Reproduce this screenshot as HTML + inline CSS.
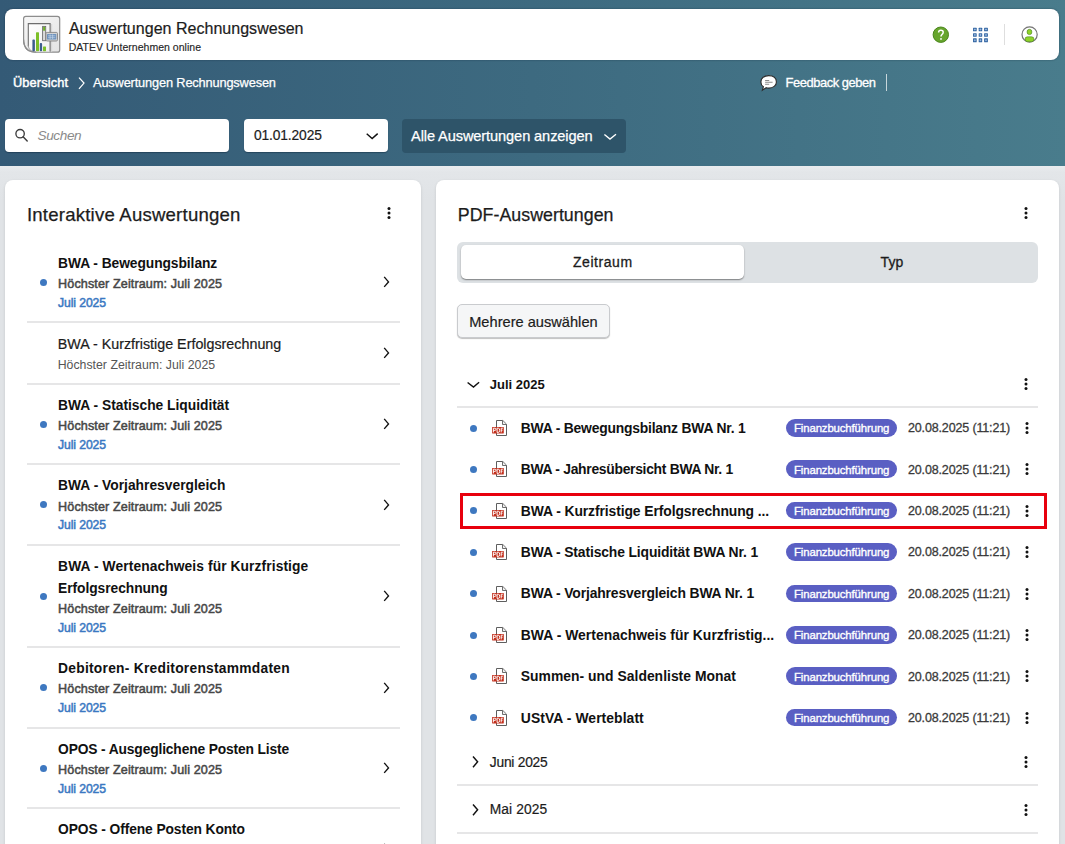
<!DOCTYPE html>
<html lang="de">
<head>
<meta charset="utf-8">
<title>Auswertungen Rechnungswesen</title>
<style>
html,body{margin:0;padding:0}
body{width:1065px;height:844px;overflow:hidden;position:relative;background:linear-gradient(#eaecee 166px,#e3e6e9 172px,#e0e3e6 200px,#e0e3e6);font-family:"Liberation Sans",sans-serif}
.t{position:absolute;line-height:1;white-space:pre}
.ic{position:absolute;overflow:visible}
.band{position:absolute;left:0;top:0;width:1065px;height:166px;background:linear-gradient(90deg,#345a76 0%,#3d6a80 50%,#497c8c 100%)}
.hdr{position:absolute;left:5px;top:9px;width:1054px;height:51px;background:#fff;border-radius:8px;box-shadow:0 0 2px rgba(0,20,40,.45)}
.inp{position:absolute;top:119px;height:33px;background:#fff;border-radius:4px;box-shadow:0 1px 1px rgba(0,20,40,.35)}
.dd{position:absolute;left:402px;top:119px;width:224px;height:33.5px;background:#2e5469;border-radius:4px}
.card{position:absolute;top:180px;height:700px;background:#fff;border-radius:8px;box-shadow:0 1px 3px rgba(0,0,0,.12)}
.sep{position:absolute;height:2px;background:#e6e6e7}
.dot{position:absolute;width:7px;height:7px;border-radius:50%;background:#3e78c0}
.badge{position:absolute;width:110.8px;height:17.7px;border-radius:9px;background:#5a5fc3}
.seg{position:absolute;left:457.4px;top:241.5px;width:580.2px;height:41.2px;background:#dde1e4;border-radius:6px}
.segw{position:absolute;left:460.6px;top:245.4px;width:283.9px;height:33.3px;background:#fff;border-radius:5px;box-shadow:0 1px 1.5px rgba(0,0,0,.45)}
.btn{position:absolute;left:457.4px;top:304.1px;width:150.4px;height:32.3px;background:#f5f6f7;border:1px solid #c9cbce;border-radius:5px;box-shadow:0 1px 1px rgba(0,0,0,.25)}
.red{position:absolute;left:460px;top:493px;width:581px;height:30px;border:3px solid #e8000d}
</style>
</head>
<body>
<div class="band"></div>
<div class="hdr"></div>
<!-- app icon -->
<svg class="ic" style="left:20px;top:14px" width="42" height="42" viewBox="0 0 42 42">
  <defs>
    <linearGradient id="pg" x1="0" y1="0" x2="1" y2="1"><stop offset="0" stop-color="#f7f7f7"/><stop offset="1" stop-color="#e4e4e4"/></linearGradient>
    <linearGradient id="ig" x1="0" y1="0" x2="1" y2="1"><stop offset="0" stop-color="#ffffff"/><stop offset="1" stop-color="#f0f0f0"/></linearGradient>
  </defs>
  <path d="M5.8 2.4 H37.4 Q39.7 2.4 39.7 4.7 V35.9 Q39.7 38.2 37.4 38.2 H16.2 Q3.6 38.2 3.6 25.6 V4.6 Q3.6 2.4 5.8 2.4 Z" fill="url(#pg)" stroke="#8d8d8d" stroke-width="1.2"/>
  <rect x="30.6" y="10" width="1.6" height="27.6" fill="#d9d9d9"/>
  <path d="M8.3 37.6 V9.6 H30.1 V37.6" fill="url(#ig)" stroke="none"/>
  <path d="M8.3 32.5 V9.6 H30.1 V37.4" fill="none" stroke="#6e6e6e" stroke-width="1.1"/>
  <path d="M8.3 31.5 Q8.6 37.2 14.5 37.7" fill="none" stroke="#9a9a9a" stroke-width="0.9"/>
  <path d="M16.2 38.2 Q3.6 38.2 3.6 25.6" fill="none" stroke="#8d8d8d" stroke-width="1.2"/>
  <rect x="12.4" y="25.6" width="2.5" height="11.6" rx="0.8" fill="#3d5d8c"/>
  <rect x="16" y="18.2" width="3" height="19" rx="0.6" fill="#7cbf28"/>
  <rect x="19.8" y="29.1" width="2.3" height="8.1" rx="0.8" fill="#3d5d8c"/>
  <rect x="23" y="32.6" width="3" height="4.6" rx="0.4" fill="#7cbf28"/>
  <rect x="22.6" y="12.4" width="3.1" height="14.3" fill="#dcdcdc" stroke="#6f6f6f" stroke-width="0.9"/>
  <rect x="23.1" y="12.9" width="2.1" height="3.8" fill="#6fb12a"/>
  <rect x="25.9" y="18.4" width="11.6" height="8.6" rx="1.2" fill="#d4d4d4" stroke="#858585" stroke-width="0.9"/>
  <rect x="27" y="19.9" width="9.3" height="5.6" rx="0.5" fill="#6f93bd"/>
  <path d="M28 21.8 H35.3 M28 23.7 H35.3 M30.1 20.4 V25 M32.6 20.4 V25" stroke="#d6e4f4" stroke-width="0.6" opacity="0.9"/>
</svg>
<!-- help -->
<svg class="ic" style="left:932px;top:26px" width="18" height="18" viewBox="0 0 18 18">
  <circle cx="8.8" cy="8.7" r="7.7" fill="#67a52d" stroke="#4a861c" stroke-width="1"/>
  <path d="M6.6 6.5 Q6.6 4.3 8.9 4.3 Q11.2 4.3 11.2 6.3 Q11.2 7.6 10.1 8.3 Q9 9 9 10.6" fill="none" stroke="#fff" stroke-width="1.5"/><circle cx="9" cy="12.9" r="0.95" fill="#fff"/>
</svg>
<!-- grid -->
<svg class="ic" style="left:972px;top:27px" width="17" height="16" viewBox="0 0 17 16">
  <g fill="#3567a3"><rect x="1.0" y="0.7" width="3.7" height="3.6" rx="0.5"/><rect x="1.0" y="6.2" width="3.7" height="3.5" rx="0.5"/><rect x="1.0" y="11.3" width="3.7" height="3.9" rx="0.5"/><rect x="6.7" y="0.7" width="3.5" height="3.6" rx="0.5"/><rect x="6.7" y="6.2" width="3.5" height="3.5" rx="0.5"/><rect x="6.7" y="11.3" width="3.5" height="3.9" rx="0.5"/><rect x="12.1" y="0.7" width="3.8" height="3.6" rx="0.5"/><rect x="12.1" y="6.2" width="3.8" height="3.5" rx="0.5"/><rect x="12.1" y="11.3" width="3.8" height="3.9" rx="0.5"/></g>
  <path d="M1.85 2.50 H3.85 M2.85 1.50 V3.50 M1.85 7.95 H3.85 M2.85 6.95 V8.95 M1.85 13.25 H3.85 M2.85 12.25 V14.25 M7.45 2.50 H9.45 M8.45 1.50 V3.50 M7.45 7.95 H9.45 M8.45 6.95 V8.95 M7.45 13.25 H9.45 M8.45 12.25 V14.25 M13.00 2.50 H15.00 M14.00 1.50 V3.50 M13.00 7.95 H15.00 M14.00 6.95 V8.95 M13.00 13.25 H15.00 M14.00 12.25 V14.25" stroke="#a9c6ea" stroke-width="0.7"/>
</svg>
<div style="position:absolute;left:1004.3px;top:24px;width:1px;height:21.4px;background:#dedede"></div>
<!-- user -->
<svg class="ic" style="left:1020px;top:25px" width="19" height="19" viewBox="0 0 19 19">
  <circle cx="9.6" cy="9.45" r="7.6" fill="#fff" stroke="#747474" stroke-width="1.2"/>
  <ellipse cx="9.45" cy="6.95" rx="2.45" ry="2.65" fill="#8fd22a" stroke="#3f7a16" stroke-width="0.55"/>
  <rect x="5" y="11.8" width="9" height="4.9" rx="2.4" fill="#8fd22a" stroke="#3f7a16" stroke-width="0.55"/>
</svg>
<!-- breadcrumb chevron -->
<svg class="ic" style="left:76.5px;top:76.5px" width="9" height="13" viewBox="0 0 9 13"><path d="M2 0.6 L7 6.1 L2 11.8" fill="none" stroke="#fff" stroke-width="1.25"/></svg>
<!-- feedback -->
<svg class="ic" style="left:759px;top:74px" width="20" height="18" viewBox="0 0 20 18">
  <path d="M9.7 1.6 C14.3 1.6 17.4 4 17.4 7.9 C17.4 11.7 14.1 14.1 9.9 14.1 C8.9 14.1 8 14 7.2 13.7 L3.4 16.2 L4.4 12.8 C2.8 11.7 1.9 10 1.9 7.9 C1.9 4 5.2 1.6 9.7 1.6 Z" fill="#fff" stroke="#2a2a2a" stroke-width="1.1"/>
  <path d="M6.1 6.5 H10.2 M6.1 8.3 H13.6 M6.1 10.2 H10.2" stroke="#8a8a8a" stroke-width="1.1"/>
</svg>
<div style="position:absolute;left:885.5px;top:73.7px;width:1.2px;height:17.8px;background:rgba(255,255,255,.7)"></div>
<!-- toolbar -->
<div class="inp" style="left:5px;width:224px"></div>
<svg class="ic" style="left:13px;top:127px" width="17" height="17" viewBox="0 0 17 17">
  <circle cx="7.1" cy="6.7" r="4.2" fill="none" stroke="#3c3c3c" stroke-width="1.35"/>
  <path d="M10.1 9.8 L14.2 13.9" stroke="#3c3c3c" stroke-width="1.45" stroke-linecap="round"/>
</svg>
<div class="inp" style="left:243.6px;width:144.2px"></div>
<svg class="ic" style="left:364.5px;top:132px" width="15" height="9" viewBox="0 0 15 9"><path d="M1.7 1.8 L7.15 6.5 L12.7 1.6" fill="none" stroke="#111" stroke-width="1.45"/></svg>
<div class="dd"></div>
<svg class="ic" style="left:602.5px;top:133px" width="15" height="8" viewBox="0 0 15 8"><path d="M1.4 1.5 L7 6.1 L13 1.3" fill="none" stroke="#fff" stroke-width="1.35"/></svg>
<!-- cards -->
<div class="card" style="left:5px;width:416px"></div>
<div class="card" style="left:436px;width:623px"></div>
<div class="seg"></div>
<div class="segw"></div>
<div class="btn"></div>
<div class="sep" style="left:27px;top:321px;width:373px"></div>
<div class="sep" style="left:27px;top:383px;width:373px"></div>
<div class="sep" style="left:27px;top:463px;width:373px"></div>
<div class="sep" style="left:27px;top:544px;width:373px"></div>
<div class="sep" style="left:27px;top:646px;width:373px"></div>
<div class="sep" style="left:27px;top:727px;width:373px"></div>
<div class="sep" style="left:27px;top:807px;width:373px"></div>
<div class="dot" style="left:39.5px;top:278.65px"></div>
<div class="dot" style="left:39.5px;top:420.65px"></div>
<div class="dot" style="left:39.5px;top:501.3px"></div>
<div class="dot" style="left:39.5px;top:592.6px"></div>
<div class="dot" style="left:39.5px;top:684px"></div>
<div class="dot" style="left:39.5px;top:764.7px"></div>
<div class="dot" style="left:39.5px;top:845.1px"></div>
<svg class="ic" style="left:382px;top:275.15px" width="9" height="14" viewBox="0 0 9 14"><path d="M2.2 1.9 L6.5 6.9 L2.2 11.9" fill="none" stroke="#111" stroke-width="1.4"/></svg>
<svg class="ic" style="left:382px;top:346.1px" width="9" height="14" viewBox="0 0 9 14"><path d="M2.2 1.9 L6.5 6.9 L2.2 11.9" fill="none" stroke="#111" stroke-width="1.4"/></svg>
<svg class="ic" style="left:382px;top:417.15px" width="9" height="14" viewBox="0 0 9 14"><path d="M2.2 1.9 L6.5 6.9 L2.2 11.9" fill="none" stroke="#111" stroke-width="1.4"/></svg>
<svg class="ic" style="left:382px;top:497.8px" width="9" height="14" viewBox="0 0 9 14"><path d="M2.2 1.9 L6.5 6.9 L2.2 11.9" fill="none" stroke="#111" stroke-width="1.4"/></svg>
<svg class="ic" style="left:382px;top:589.1px" width="9" height="14" viewBox="0 0 9 14"><path d="M2.2 1.9 L6.5 6.9 L2.2 11.9" fill="none" stroke="#111" stroke-width="1.4"/></svg>
<svg class="ic" style="left:382px;top:680.5px" width="9" height="14" viewBox="0 0 9 14"><path d="M2.2 1.9 L6.5 6.9 L2.2 11.9" fill="none" stroke="#111" stroke-width="1.4"/></svg>
<svg class="ic" style="left:382px;top:761.2px" width="9" height="14" viewBox="0 0 9 14"><path d="M2.2 1.9 L6.5 6.9 L2.2 11.9" fill="none" stroke="#111" stroke-width="1.4"/></svg>
<svg class="ic" style="left:382px;top:841.6px" width="9" height="14" viewBox="0 0 9 14"><path d="M2.2 1.9 L6.5 6.9 L2.2 11.9" fill="none" stroke="#111" stroke-width="1.4"/></svg>
<div class="sep" style="left:457px;top:406px;width:581px"></div>
<div class="sep" style="left:457px;top:784px;width:581px"></div>
<div class="sep" style="left:457px;top:832px;width:581px"></div>
<div class="dot" style="left:470px;top:424.5px"></div>
<svg class="ic" style="left:491px;top:420px" width="16" height="17" viewBox="0 0 16 17"><path d="M5.5 0.5 H11.8 L15.5 4.2 V15.5 H5.5 Z" fill="#fff" stroke="#5e5e5e" stroke-width="1"/><path d="M11.5 0.8 V4.5 H15.2" fill="#f0f0f0" stroke="#5e5e5e" stroke-width="0.9"/><rect x="1.1" y="6.9" width="11.7" height="6.6" rx="0.4" fill="#c3301d"/><path d="M2.4 12.4 V8.2 H3.9 Q5 8.2 5 9.3 Q5 10.4 3.9 10.4 H2.4 M6.1 12.4 V8.2 H7.3 Q8.7 8.2 8.7 10.3 Q8.7 12.4 7.3 12.4 Z M10.2 12.4 V8.2 H11.9 M10.2 10.2 H11.5" fill="none" stroke="#fff" stroke-width="0.95"/></svg>
<div class="badge" style="left:786.3px;top:418.9px"></div>
<svg class="ic" style="left:1023.5px;top:420px" width="6" height="16" viewBox="0 0 6 16"><circle cx="3" cy="3.4" r="1.5" fill="#111"/><circle cx="3" cy="8" r="1.5" fill="#111"/><circle cx="3" cy="12.6" r="1.5" fill="#111"/></svg>
<div class="dot" style="left:470px;top:465.9px"></div>
<svg class="ic" style="left:491px;top:461px" width="16" height="17" viewBox="0 0 16 17"><path d="M5.5 0.5 H11.8 L15.5 4.2 V15.5 H5.5 Z" fill="#fff" stroke="#5e5e5e" stroke-width="1"/><path d="M11.5 0.8 V4.5 H15.2" fill="#f0f0f0" stroke="#5e5e5e" stroke-width="0.9"/><rect x="1.1" y="6.9" width="11.7" height="6.6" rx="0.4" fill="#c3301d"/><path d="M2.4 12.4 V8.2 H3.9 Q5 8.2 5 9.3 Q5 10.4 3.9 10.4 H2.4 M6.1 12.4 V8.2 H7.3 Q8.7 8.2 8.7 10.3 Q8.7 12.4 7.3 12.4 Z M10.2 12.4 V8.2 H11.9 M10.2 10.2 H11.5" fill="none" stroke="#fff" stroke-width="0.95"/></svg>
<div class="badge" style="left:786.3px;top:460.3px"></div>
<svg class="ic" style="left:1023.5px;top:461.4px" width="6" height="16" viewBox="0 0 6 16"><circle cx="3" cy="3.4" r="1.5" fill="#111"/><circle cx="3" cy="8" r="1.5" fill="#111"/><circle cx="3" cy="12.6" r="1.5" fill="#111"/></svg>
<div class="dot" style="left:470px;top:507.3px"></div>
<svg class="ic" style="left:491px;top:503px" width="16" height="17" viewBox="0 0 16 17"><path d="M5.5 0.5 H11.8 L15.5 4.2 V15.5 H5.5 Z" fill="#fff" stroke="#5e5e5e" stroke-width="1"/><path d="M11.5 0.8 V4.5 H15.2" fill="#f0f0f0" stroke="#5e5e5e" stroke-width="0.9"/><rect x="1.1" y="6.9" width="11.7" height="6.6" rx="0.4" fill="#c3301d"/><path d="M2.4 12.4 V8.2 H3.9 Q5 8.2 5 9.3 Q5 10.4 3.9 10.4 H2.4 M6.1 12.4 V8.2 H7.3 Q8.7 8.2 8.7 10.3 Q8.7 12.4 7.3 12.4 Z M10.2 12.4 V8.2 H11.9 M10.2 10.2 H11.5" fill="none" stroke="#fff" stroke-width="0.95"/></svg>
<div class="badge" style="left:786.3px;top:501.7px"></div>
<svg class="ic" style="left:1023.5px;top:502.8px" width="6" height="16" viewBox="0 0 6 16"><circle cx="3" cy="3.4" r="1.5" fill="#111"/><circle cx="3" cy="8" r="1.5" fill="#111"/><circle cx="3" cy="12.6" r="1.5" fill="#111"/></svg>
<div class="dot" style="left:470px;top:548.7px"></div>
<svg class="ic" style="left:491px;top:544px" width="16" height="17" viewBox="0 0 16 17"><path d="M5.5 0.5 H11.8 L15.5 4.2 V15.5 H5.5 Z" fill="#fff" stroke="#5e5e5e" stroke-width="1"/><path d="M11.5 0.8 V4.5 H15.2" fill="#f0f0f0" stroke="#5e5e5e" stroke-width="0.9"/><rect x="1.1" y="6.9" width="11.7" height="6.6" rx="0.4" fill="#c3301d"/><path d="M2.4 12.4 V8.2 H3.9 Q5 8.2 5 9.3 Q5 10.4 3.9 10.4 H2.4 M6.1 12.4 V8.2 H7.3 Q8.7 8.2 8.7 10.3 Q8.7 12.4 7.3 12.4 Z M10.2 12.4 V8.2 H11.9 M10.2 10.2 H11.5" fill="none" stroke="#fff" stroke-width="0.95"/></svg>
<div class="badge" style="left:786.3px;top:543.1px"></div>
<svg class="ic" style="left:1023.5px;top:544.2px" width="6" height="16" viewBox="0 0 6 16"><circle cx="3" cy="3.4" r="1.5" fill="#111"/><circle cx="3" cy="8" r="1.5" fill="#111"/><circle cx="3" cy="12.6" r="1.5" fill="#111"/></svg>
<div class="dot" style="left:470px;top:590.1px"></div>
<svg class="ic" style="left:491px;top:586px" width="16" height="17" viewBox="0 0 16 17"><path d="M5.5 0.5 H11.8 L15.5 4.2 V15.5 H5.5 Z" fill="#fff" stroke="#5e5e5e" stroke-width="1"/><path d="M11.5 0.8 V4.5 H15.2" fill="#f0f0f0" stroke="#5e5e5e" stroke-width="0.9"/><rect x="1.1" y="6.9" width="11.7" height="6.6" rx="0.4" fill="#c3301d"/><path d="M2.4 12.4 V8.2 H3.9 Q5 8.2 5 9.3 Q5 10.4 3.9 10.4 H2.4 M6.1 12.4 V8.2 H7.3 Q8.7 8.2 8.7 10.3 Q8.7 12.4 7.3 12.4 Z M10.2 12.4 V8.2 H11.9 M10.2 10.2 H11.5" fill="none" stroke="#fff" stroke-width="0.95"/></svg>
<div class="badge" style="left:786.3px;top:584.5px"></div>
<svg class="ic" style="left:1023.5px;top:585.6px" width="6" height="16" viewBox="0 0 6 16"><circle cx="3" cy="3.4" r="1.5" fill="#111"/><circle cx="3" cy="8" r="1.5" fill="#111"/><circle cx="3" cy="12.6" r="1.5" fill="#111"/></svg>
<div class="dot" style="left:470px;top:631.5px"></div>
<svg class="ic" style="left:491px;top:627px" width="16" height="17" viewBox="0 0 16 17"><path d="M5.5 0.5 H11.8 L15.5 4.2 V15.5 H5.5 Z" fill="#fff" stroke="#5e5e5e" stroke-width="1"/><path d="M11.5 0.8 V4.5 H15.2" fill="#f0f0f0" stroke="#5e5e5e" stroke-width="0.9"/><rect x="1.1" y="6.9" width="11.7" height="6.6" rx="0.4" fill="#c3301d"/><path d="M2.4 12.4 V8.2 H3.9 Q5 8.2 5 9.3 Q5 10.4 3.9 10.4 H2.4 M6.1 12.4 V8.2 H7.3 Q8.7 8.2 8.7 10.3 Q8.7 12.4 7.3 12.4 Z M10.2 12.4 V8.2 H11.9 M10.2 10.2 H11.5" fill="none" stroke="#fff" stroke-width="0.95"/></svg>
<div class="badge" style="left:786.3px;top:625.9px"></div>
<svg class="ic" style="left:1023.5px;top:627px" width="6" height="16" viewBox="0 0 6 16"><circle cx="3" cy="3.4" r="1.5" fill="#111"/><circle cx="3" cy="8" r="1.5" fill="#111"/><circle cx="3" cy="12.6" r="1.5" fill="#111"/></svg>
<div class="dot" style="left:470px;top:672.9px"></div>
<svg class="ic" style="left:491px;top:668px" width="16" height="17" viewBox="0 0 16 17"><path d="M5.5 0.5 H11.8 L15.5 4.2 V15.5 H5.5 Z" fill="#fff" stroke="#5e5e5e" stroke-width="1"/><path d="M11.5 0.8 V4.5 H15.2" fill="#f0f0f0" stroke="#5e5e5e" stroke-width="0.9"/><rect x="1.1" y="6.9" width="11.7" height="6.6" rx="0.4" fill="#c3301d"/><path d="M2.4 12.4 V8.2 H3.9 Q5 8.2 5 9.3 Q5 10.4 3.9 10.4 H2.4 M6.1 12.4 V8.2 H7.3 Q8.7 8.2 8.7 10.3 Q8.7 12.4 7.3 12.4 Z M10.2 12.4 V8.2 H11.9 M10.2 10.2 H11.5" fill="none" stroke="#fff" stroke-width="0.95"/></svg>
<div class="badge" style="left:786.3px;top:667.3px"></div>
<svg class="ic" style="left:1023.5px;top:668.4px" width="6" height="16" viewBox="0 0 6 16"><circle cx="3" cy="3.4" r="1.5" fill="#111"/><circle cx="3" cy="8" r="1.5" fill="#111"/><circle cx="3" cy="12.6" r="1.5" fill="#111"/></svg>
<div class="dot" style="left:470px;top:714.3px"></div>
<svg class="ic" style="left:491px;top:710px" width="16" height="17" viewBox="0 0 16 17"><path d="M5.5 0.5 H11.8 L15.5 4.2 V15.5 H5.5 Z" fill="#fff" stroke="#5e5e5e" stroke-width="1"/><path d="M11.5 0.8 V4.5 H15.2" fill="#f0f0f0" stroke="#5e5e5e" stroke-width="0.9"/><rect x="1.1" y="6.9" width="11.7" height="6.6" rx="0.4" fill="#c3301d"/><path d="M2.4 12.4 V8.2 H3.9 Q5 8.2 5 9.3 Q5 10.4 3.9 10.4 H2.4 M6.1 12.4 V8.2 H7.3 Q8.7 8.2 8.7 10.3 Q8.7 12.4 7.3 12.4 Z M10.2 12.4 V8.2 H11.9 M10.2 10.2 H11.5" fill="none" stroke="#fff" stroke-width="0.95"/></svg>
<div class="badge" style="left:786.3px;top:708.7px"></div>
<svg class="ic" style="left:1023.5px;top:709.8px" width="6" height="16" viewBox="0 0 6 16"><circle cx="3" cy="3.4" r="1.5" fill="#111"/><circle cx="3" cy="8" r="1.5" fill="#111"/><circle cx="3" cy="12.6" r="1.5" fill="#111"/></svg>
<svg class="ic" style="left:385.6px;top:204.9px" width="6" height="16" viewBox="0 0 6 16"><circle cx="3" cy="3.4" r="1.5" fill="#111"/><circle cx="3" cy="8" r="1.5" fill="#111"/><circle cx="3" cy="12.6" r="1.5" fill="#111"/></svg>
<svg class="ic" style="left:1023.3px;top:205px" width="6" height="16" viewBox="0 0 6 16"><circle cx="3" cy="3.4" r="1.5" fill="#111"/><circle cx="3" cy="8" r="1.5" fill="#111"/><circle cx="3" cy="12.6" r="1.5" fill="#111"/></svg>
<svg class="ic" style="left:1023.4px;top:376px" width="6" height="16" viewBox="0 0 6 16"><circle cx="3" cy="3.4" r="1.5" fill="#111"/><circle cx="3" cy="8" r="1.5" fill="#111"/><circle cx="3" cy="12.6" r="1.5" fill="#111"/></svg>
<svg class="ic" style="left:1023.4px;top:754px" width="6" height="16" viewBox="0 0 6 16"><circle cx="3" cy="3.4" r="1.5" fill="#111"/><circle cx="3" cy="8" r="1.5" fill="#111"/><circle cx="3" cy="12.6" r="1.5" fill="#111"/></svg>
<svg class="ic" style="left:1023.4px;top:801.5px" width="6" height="16" viewBox="0 0 6 16"><circle cx="3" cy="3.4" r="1.5" fill="#111"/><circle cx="3" cy="8" r="1.5" fill="#111"/><circle cx="3" cy="12.6" r="1.5" fill="#111"/></svg>
<svg class="ic" style="left:466px;top:380px" width="15" height="10"><path d="M1.6 2.5 L7.5 7.1 L13.1 2.3" fill="none" stroke="#111" stroke-width="1.45"/></svg>
<svg class="ic" style="left:470.5px;top:756px" width="9" height="13" viewBox="0 0 9 13"><path d="M2 0.5 L6.6 5.8 L2 11.2" fill="none" stroke="#111" stroke-width="1.45"/></svg>
<svg class="ic" style="left:470.5px;top:803.8px" width="9" height="13" viewBox="0 0 9 13"><path d="M2 0.5 L6.6 5.8 L2 11.2" fill="none" stroke="#111" stroke-width="1.45"/></svg>
<div class="t" style="left:68.9px;top:21.16px;font-size:16px;color:#1c1c1c;letter-spacing:0.026px;-webkit-text-stroke:0.2px #1c1c1c;">Auswertungen Rechnungswesen</div>
<div class="t" style="left:68.7px;top:41.91px;font-size:10.5px;color:#262626;letter-spacing:0.026px;-webkit-text-stroke:0.15px #262626;">DATEV Unternehmen online</div>
<div class="t" style="left:13px;top:76.97px;font-size:12.8px;color:#ffffff;letter-spacing:0.117px;-webkit-text-stroke:0.45px #ffffff;">Übersicht</div>
<div class="t" style="left:93px;top:76.97px;font-size:12.8px;color:#ffffff;letter-spacing:-0.159px;-webkit-text-stroke:0.25px #ffffff;">Auswertungen Rechnungswesen</div>
<div class="t" style="left:785.5px;top:77.18px;font-size:12.9px;color:#ffffff;letter-spacing:-0.431px;-webkit-text-stroke:0.3px #ffffff;">Feedback geben</div>
<div class="t" style="left:37.6px;top:129.29px;font-size:13.6px;color:#8a8a8a;font-style:italic;letter-spacing:-0.425px;">Suchen</div>
<div class="t" style="left:253.9px;top:128.72px;font-size:13.8px;color:#1c1c1c;letter-spacing:-0.119px;-webkit-text-stroke:0.2px #1c1c1c;">01.01.2025</div>
<div class="t" style="left:411px;top:128.84px;font-size:14.6px;color:#ffffff;letter-spacing:-0.102px;-webkit-text-stroke:0.25px #ffffff;">Alle Auswertungen anzeigen</div>
<div class="t" style="left:26.9px;top:206.26px;font-size:18.6px;color:#1c1c1c;letter-spacing:0.206px;-webkit-text-stroke:0.25px #1c1c1c;">Interaktive Auswertungen</div>
<div class="t" style="left:58.1px;top:256.82px;font-size:13.8px;color:#111111;font-weight:700;letter-spacing:-0.065px;">BWA - Bewegungsbilanz</div>
<div class="t" style="left:58.1px;top:278.14px;font-size:12.6px;color:#474747;letter-spacing:0.109px;-webkit-text-stroke:0.5px #474747;">Höchster Zeitraum: Juli 2025</div>
<div class="t" style="left:58.1px;top:296.97px;font-size:12.2px;color:#3a78c2;letter-spacing:-0.105px;-webkit-text-stroke:0.5px #3a78c2;">Juli 2025</div>
<div class="t" style="left:57.7px;top:336.7px;font-size:14.3px;color:#1c1c1c;-webkit-text-stroke:0.2px #1c1c1c;">BWA - Kurzfristige Erfolgsrechnung</div>
<div class="t" style="left:57.7px;top:359.09px;font-size:12.3px;color:#555555;letter-spacing:0.010px;">Höchster Zeitraum: Juli 2025</div>
<div class="t" style="left:58.1px;top:398.72px;font-size:13.8px;color:#111111;font-weight:700;letter-spacing:-0.009px;">BWA - Statische Liquidität</div>
<div class="t" style="left:58.1px;top:420.04px;font-size:12.6px;color:#474747;letter-spacing:0.109px;-webkit-text-stroke:0.5px #474747;">Höchster Zeitraum: Juli 2025</div>
<div class="t" style="left:58.1px;top:438.87px;font-size:12.2px;color:#3a78c2;letter-spacing:-0.105px;-webkit-text-stroke:0.5px #3a78c2;">Juli 2025</div>
<div class="t" style="left:58.1px;top:479.22px;font-size:13.8px;color:#111111;font-weight:700;letter-spacing:0.009px;">BWA - Vorjahresvergleich</div>
<div class="t" style="left:58.1px;top:500.54px;font-size:12.6px;color:#474747;letter-spacing:0.109px;-webkit-text-stroke:0.5px #474747;">Höchster Zeitraum: Juli 2025</div>
<div class="t" style="left:58.1px;top:519.37px;font-size:12.2px;color:#3a78c2;letter-spacing:-0.105px;-webkit-text-stroke:0.5px #3a78c2;">Juli 2025</div>
<div class="t" style="left:58.1px;top:560.02px;font-size:13.8px;color:#111111;font-weight:700;letter-spacing:0.094px;">BWA - Wertenachweis für Kurzfristige</div>
<div class="t" style="left:58.1px;top:582.32px;font-size:13.8px;color:#111111;font-weight:700;letter-spacing:-0.058px;">Erfolgsrechnung</div>
<div class="t" style="left:58.1px;top:602.74px;font-size:12.6px;color:#474747;letter-spacing:0.109px;-webkit-text-stroke:0.5px #474747;">Höchster Zeitraum: Juli 2025</div>
<div class="t" style="left:58.1px;top:621.57px;font-size:12.2px;color:#3a78c2;letter-spacing:-0.105px;-webkit-text-stroke:0.5px #3a78c2;">Juli 2025</div>
<div class="t" style="left:58.1px;top:661.82px;font-size:13.8px;color:#111111;font-weight:700;letter-spacing:0.257px;">Debitoren- Kreditorenstammdaten</div>
<div class="t" style="left:58.1px;top:683.14px;font-size:12.6px;color:#474747;letter-spacing:0.109px;-webkit-text-stroke:0.5px #474747;">Höchster Zeitraum: Juli 2025</div>
<div class="t" style="left:58.1px;top:701.97px;font-size:12.2px;color:#3a78c2;letter-spacing:-0.105px;-webkit-text-stroke:0.5px #3a78c2;">Juli 2025</div>
<div class="t" style="left:58.1px;top:742.82px;font-size:13.8px;color:#111111;font-weight:700;letter-spacing:-0.143px;">OPOS - Ausgeglichene Posten Liste</div>
<div class="t" style="left:58.1px;top:764.14px;font-size:12.6px;color:#474747;letter-spacing:0.109px;-webkit-text-stroke:0.5px #474747;">Höchster Zeitraum: Juli 2025</div>
<div class="t" style="left:58.1px;top:782.97px;font-size:12.2px;color:#3a78c2;letter-spacing:-0.105px;-webkit-text-stroke:0.5px #3a78c2;">Juli 2025</div>
<div class="t" style="left:58.1px;top:823.22px;font-size:13.8px;color:#111111;font-weight:700;letter-spacing:-0.095px;">OPOS - Offene Posten Konto</div>
<div class="t" style="left:58.1px;top:844.54px;font-size:12.6px;color:#474747;letter-spacing:0.109px;-webkit-text-stroke:0.5px #474747;">Höchster Zeitraum: Juli 2025</div>
<div class="t" style="left:58.1px;top:863.37px;font-size:12.2px;color:#3a78c2;letter-spacing:-0.105px;-webkit-text-stroke:0.5px #3a78c2;">Juli 2025</div>
<div class="t" style="left:457.8px;top:206.63px;font-size:17.8px;color:#1c1c1c;letter-spacing:0.032px;-webkit-text-stroke:0.25px #1c1c1c;">PDF-Auswertungen</div>
<div class="t" style="left:573px;top:255.35px;font-size:14px;color:#1c1c1c;letter-spacing:0.552px;-webkit-text-stroke:0.3px #1c1c1c;">Zeitraum</div>
<div class="t" style="left:880.6px;top:255.35px;font-size:14px;color:#1c1c1c;letter-spacing:0.017px;-webkit-text-stroke:0.3px #1c1c1c;">Typ</div>
<div class="t" style="left:469.2px;top:314.64px;font-size:14.6px;color:#1c1c1c;letter-spacing:0.017px;-webkit-text-stroke:0.2px #1c1c1c;">Mehrere auswählen</div>
<div class="t" style="left:489.8px;top:378.1px;font-size:13px;color:#111111;font-weight:700;letter-spacing:0.009px;">Juli 2025</div>
<div class="t" style="left:520.8px;top:421.84px;font-size:13.9px;color:#111111;font-weight:700;letter-spacing:-0.214px;">BWA - Bewegungsbilanz BWA Nr. 1</div>
<div class="t" style="left:794px;top:423.15px;font-size:11.4px;color:#ffffff;letter-spacing:-0.131px;-webkit-text-stroke:0.35px #ffffff;">Finanzbuchführung</div>
<div class="t" style="left:908px;top:422.22px;font-size:12.5px;color:#3a3a3a;letter-spacing:-0.148px;-webkit-text-stroke:0.3px #3a3a3a;">20.08.2025 (11:21)</div>
<div class="t" style="left:520.8px;top:463.24px;font-size:13.9px;color:#111111;font-weight:700;letter-spacing:-0.297px;">BWA - Jahresübersicht BWA Nr. 1</div>
<div class="t" style="left:794px;top:464.55px;font-size:11.4px;color:#ffffff;letter-spacing:-0.131px;-webkit-text-stroke:0.35px #ffffff;">Finanzbuchführung</div>
<div class="t" style="left:908px;top:463.62px;font-size:12.5px;color:#3a3a3a;letter-spacing:-0.148px;-webkit-text-stroke:0.3px #3a3a3a;">20.08.2025 (11:21)</div>
<div class="t" style="left:520.8px;top:504.64px;font-size:13.9px;color:#111111;font-weight:700;letter-spacing:-0.095px;">BWA - Kurzfristige Erfolgsrechnung ...</div>
<div class="t" style="left:794px;top:505.95px;font-size:11.4px;color:#ffffff;letter-spacing:-0.131px;-webkit-text-stroke:0.35px #ffffff;">Finanzbuchführung</div>
<div class="t" style="left:908px;top:505.02px;font-size:12.5px;color:#3a3a3a;letter-spacing:-0.148px;-webkit-text-stroke:0.3px #3a3a3a;">20.08.2025 (11:21)</div>
<div class="t" style="left:520.8px;top:546.04px;font-size:13.9px;color:#111111;font-weight:700;letter-spacing:-0.135px;">BWA - Statische Liquidität BWA Nr. 1</div>
<div class="t" style="left:794px;top:547.35px;font-size:11.4px;color:#ffffff;letter-spacing:-0.131px;-webkit-text-stroke:0.35px #ffffff;">Finanzbuchführung</div>
<div class="t" style="left:908px;top:546.42px;font-size:12.5px;color:#3a3a3a;letter-spacing:-0.148px;-webkit-text-stroke:0.3px #3a3a3a;">20.08.2025 (11:21)</div>
<div class="t" style="left:520.8px;top:587.44px;font-size:13.9px;color:#111111;font-weight:700;letter-spacing:-0.138px;">BWA - Vorjahresvergleich BWA Nr. 1</div>
<div class="t" style="left:794px;top:588.75px;font-size:11.4px;color:#ffffff;letter-spacing:-0.131px;-webkit-text-stroke:0.35px #ffffff;">Finanzbuchführung</div>
<div class="t" style="left:908px;top:587.82px;font-size:12.5px;color:#3a3a3a;letter-spacing:-0.148px;-webkit-text-stroke:0.3px #3a3a3a;">20.08.2025 (11:21)</div>
<div class="t" style="left:520.8px;top:628.84px;font-size:13.9px;color:#111111;font-weight:700;letter-spacing:0.028px;">BWA - Wertenachweis für Kurzfristig...</div>
<div class="t" style="left:794px;top:630.15px;font-size:11.4px;color:#ffffff;letter-spacing:-0.131px;-webkit-text-stroke:0.35px #ffffff;">Finanzbuchführung</div>
<div class="t" style="left:908px;top:629.22px;font-size:12.5px;color:#3a3a3a;letter-spacing:-0.148px;-webkit-text-stroke:0.3px #3a3a3a;">20.08.2025 (11:21)</div>
<div class="t" style="left:520.8px;top:670.24px;font-size:13.9px;color:#111111;font-weight:700;letter-spacing:0.018px;">Summen- und Saldenliste Monat</div>
<div class="t" style="left:794px;top:671.55px;font-size:11.4px;color:#ffffff;letter-spacing:-0.131px;-webkit-text-stroke:0.35px #ffffff;">Finanzbuchführung</div>
<div class="t" style="left:908px;top:670.62px;font-size:12.5px;color:#3a3a3a;letter-spacing:-0.148px;-webkit-text-stroke:0.3px #3a3a3a;">20.08.2025 (11:21)</div>
<div class="t" style="left:520.8px;top:711.64px;font-size:13.9px;color:#111111;font-weight:700;letter-spacing:0.073px;">UStVA - Werteblatt</div>
<div class="t" style="left:794px;top:712.95px;font-size:11.4px;color:#ffffff;letter-spacing:-0.131px;-webkit-text-stroke:0.35px #ffffff;">Finanzbuchführung</div>
<div class="t" style="left:908px;top:712.02px;font-size:12.5px;color:#3a3a3a;letter-spacing:-0.148px;-webkit-text-stroke:0.3px #3a3a3a;">20.08.2025 (11:21)</div>
<div class="t" style="left:489.8px;top:755.52px;font-size:13.8px;color:#1c1c1c;letter-spacing:-0.244px;-webkit-text-stroke:0.2px #1c1c1c;">Juni 2025</div>
<div class="t" style="left:489.8px;top:803.12px;font-size:13.8px;color:#1c1c1c;letter-spacing:0.075px;-webkit-text-stroke:0.2px #1c1c1c;">Mai 2025</div>
<div class="red"></div>
</body>
</html>
